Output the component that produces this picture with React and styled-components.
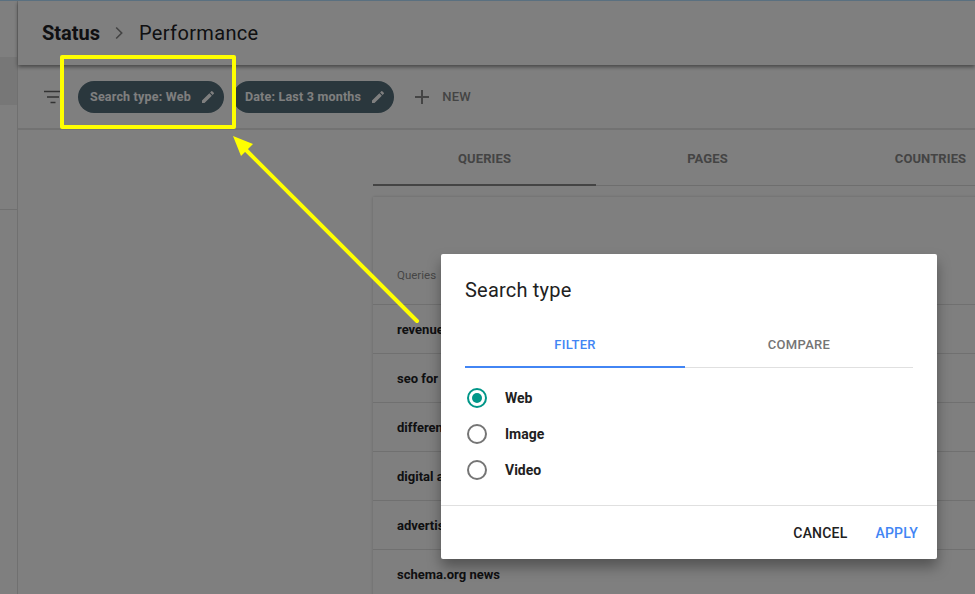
import React from 'react'
import styled, { createGlobalStyle } from 'styled-components'

const queries = [
  'revenue management',
  'seo for small business',
  'difference between seo',
  'digital advertising',
  'advertising agency',
  'schema.org news',
]

export default function App() {
  return (
    <Page>
      <GlobalStyle />
      <Sidebar>
        <SidebarItem />
        <SidebarLine />
      </Sidebar>
      <Main>
        <Header>
          <Crumb>Status</Crumb>
          <CrumbArrow viewBox="0 0 24 24">
            <path d="M8.6 5.4 15.2 12l-6.6 6.6" fill="none" stroke="#888" strokeWidth="2" />
          </CrumbArrow>
          <CrumbCurrent>Performance</CrumbCurrent>
        </Header>
        <FilterBar>
          <FilterIcon viewBox="0 0 18 14">
            <path d="M0 1.5h18M3 7h12M6.5 12.5h5" fill="none" stroke="#666" strokeWidth="1.6" />
          </FilterIcon>
          <Chip>
            Search type: Web
            <PencilIcon />
          </Chip>
          <Chip>
            Date: Last 3 months
            <PencilIcon />
          </Chip>
          <NewButton>
            <PlusIcon viewBox="0 0 14 14">
              <path d="M7 0v14M0 7h14" fill="none" stroke="#8a8a8a" strokeWidth="2" />
            </PlusIcon>
            NEW
          </NewButton>
        </FilterBar>
        <Content>
          <Tabs>
            <Tab $active>QUERIES</Tab>
            <Tab>PAGES</Tab>
            <Tab>COUNTRIES</Tab>
          </Tabs>
          <Card>
            <CardHead>Queries</CardHead>
            {queries.map((q) => (
              <Row key={q}>{q}</Row>
            ))}
          </Card>
        </Content>
      </Main>

      <Scrim />

      <Annotation viewBox="0 0 975 594">
        <rect x="62" y="57" width="172" height="70" fill="none" stroke="#ffff00" strokeWidth="4" strokeLinejoin="round" />
        <path d="M245 149 417 321" stroke="#ffff00" strokeWidth="4" strokeLinecap="round" />
        <path d="M233 136 253 144 241 156Z" fill="#ffff00" />
      </Annotation>

      <Dialog>
        <DialogTitle>Search type</DialogTitle>
        <DialogTabs>
          <DialogTab $active>FILTER</DialogTab>
          <DialogTab>COMPARE</DialogTab>
        </DialogTabs>
        <RadioList>
          <RadioRow>
            <Radio $checked />
            Web
          </RadioRow>
          <RadioRow>
            <Radio />
            Image
          </RadioRow>
          <RadioRow>
            <Radio />
            Video
          </RadioRow>
        </RadioList>
        <DialogFooter>
          <FooterButton>CANCEL</FooterButton>
          <FooterButton $primary>APPLY</FooterButton>
        </DialogFooter>
      </Dialog>
    </Page>
  )
}

function PencilIcon() {
  return (
    <Pencil viewBox="0 0 24 24">
      <path
        d="M3 17.25V21h3.75L17.81 9.94l-3.75-3.75L3 17.25zM20.71 7.04a1 1 0 0 0 0-1.41l-2.34-2.34a1 1 0 0 0-1.41 0l-1.83 1.83 3.75 3.75 1.83-1.83z"
        fill="#fff"
      />
    </Pencil>
  )
}

const GlobalStyle = createGlobalStyle`
  html, body {
    margin: 0;
    padding: 0;
    background: #fff;
  }
  body {
    font-family: Roboto, "Liberation Sans", sans-serif;
  }
`

const Page = styled.div`
  position: relative;
  display: flex;
  width: 975px;
  height: 594px;
  overflow: hidden;
  background: #fff;
  border-top: 1px solid #5a7080;
  box-sizing: border-box;
`

const Sidebar = styled.div`
  width: 18px;
  flex-shrink: 0;
  box-sizing: border-box;
  padding-top: 56px;
  border-right: 1px solid #e0e0e0;
`

const SidebarItem = styled.div`
  height: 48px;
  background: #eeeeee;
`

const SidebarLine = styled.div`
  margin-top: 104px;
  border-top: 1px solid #e0e0e0;
`

const Main = styled.div`
  flex: 1;
  min-width: 0;
  display: flex;
  flex-direction: column;
`

const Header = styled.div`
  height: 64px;
  flex-shrink: 0;
  display: flex;
  align-items: center;
  padding-left: 24px;
  box-shadow: 0 2px 4px rgba(0, 0, 0, 0.45);
  position: relative;
`

const Crumb = styled.span`
  font-size: 20px;
  font-weight: 700;
  color: #202124;
`

const CrumbArrow = styled.svg`
  width: 20px;
  height: 20px;
  margin: 0 10px 0 9px;
`

const CrumbCurrent = styled.span`
  font-size: 20px;
  font-weight: 400;
  letter-spacing: 0.35px;
  color: #202124;
`

const FilterBar = styled.div`
  height: 65px;
  flex-shrink: 0;
  box-sizing: border-box;
  display: flex;
  align-items: center;
  padding-left: 26px;
  border-bottom: 2px solid #e4e4e4;
`

const FilterIcon = styled.svg`
  width: 18px;
  height: 14px;
  margin-right: 16px;
`

const Chip = styled.div`
  height: 32px;
  box-sizing: border-box;
  display: flex;
  align-items: center;
  gap: 9px;
  padding: 0 8px 0 12px;
  margin-right: 9px;
  border-radius: 16px;
  background: #546e7a;
  color: #fff;
  font-size: 12.5px;
  font-weight: 700;
  letter-spacing: 0.2px;
  white-space: nowrap;
`

const Pencil = styled.svg`
  width: 16px;
  height: 16px;
`

const NewButton = styled.div`
  display: flex;
  align-items: center;
  gap: 13px;
  margin-left: 12px;
  font-size: 13px;
  font-weight: 500;
  letter-spacing: 0.3px;
  color: #888;
`

const PlusIcon = styled.svg`
  width: 14px;
  height: 14px;
`

const Content = styled.div`
  flex: 1;
  min-height: 0;
  padding-left: 355px;
`

const Tabs = styled.div`
  display: flex;
  height: 55px;
  border-bottom: 1px solid #dcdcdc;
  box-sizing: content-box;
`

const Tab = styled.div`
  flex: 0 0 223px;
  box-sizing: border-box;
  height: 56px;
  padding-top: 2px;
  display: flex;
  align-items: center;
  justify-content: center;
  font-size: 13px;
  font-weight: 700;
  letter-spacing: 0.1px;
  color: #888;
  border-bottom: 2px solid ${(p) => (p.$active ? '#888' : 'transparent')};
`

const Card = styled.div`
  margin-top: 11px;
  width: 700px;
  box-shadow: 0 0 3px rgba(0, 0, 0, 0.2);
`

const CardHead = styled.div`
  height: 108px;
  box-sizing: border-box;
  display: flex;
  align-items: flex-end;
  padding: 0 0 22px 24px;
  font-size: 11.5px;
  color: #8c8c8c;
  border-bottom: 1px solid #e0e0e0;
`

const Row = styled.div`
  height: 49px;
  box-sizing: border-box;
  display: flex;
  align-items: center;
  padding-left: 24px;
  font-size: 13px;
  font-weight: 700;
  color: #202124;
  border-bottom: 1px solid #e0e0e0;
`

const Scrim = styled.div`
  position: absolute;
  inset: 0;
  background: rgba(0, 0, 0, 0.5);
`

const Annotation = styled.svg`
  position: absolute;
  left: 0;
  top: -1px;
  width: 975px;
  height: 594px;
  pointer-events: none;
`

const Dialog = styled.div`
  position: absolute;
  left: 441px;
  top: 253px;
  width: 496px;
  height: 305px;
  display: flex;
  flex-direction: column;
  background: #fff;
  border-radius: 2px;
  box-shadow: 0 8px 14px rgba(0, 0, 0, 0.35);
`

const DialogTitle = styled.div`
  padding: 24px 24px 0;
  font-size: 20px;
  line-height: 24px;
  font-weight: 400;
  letter-spacing: 0.2px;
  color: #212121;
`

const DialogTabs = styled.div`
  display: flex;
  margin: 20px 24px 0;
  border-bottom: 1px solid #e0e0e0;
`

const DialogTab = styled.div`
  flex: 0 0 220px;
  height: 46px;
  margin-bottom: -1px;
  padding-left: ${(p) => (p.$active ? '0' : '8px')};
  box-sizing: border-box;
  display: flex;
  align-items: center;
  justify-content: center;
  font-size: 13px;
  font-weight: 500;
  letter-spacing: 0.3px;
  color: ${(p) => (p.$active ? '#4285f4' : '#757575')};
  border-bottom: 2px solid ${(p) => (p.$active ? '#4285f4' : 'transparent')};
`

const RadioList = styled.div`
  flex: 1;
  display: flex;
  flex-direction: column;
  gap: 16px;
  padding: 20px 26px 0;
`

const RadioRow = styled.div`
  height: 20px;
  display: flex;
  align-items: center;
  gap: 18px;
  font-size: 14px;
  font-weight: 700;
  color: #212121;
`

const Radio = styled.span`
  width: 20px;
  height: 20px;
  box-sizing: border-box;
  border-radius: 50%;
  border: 2px solid ${(p) => (p.$checked ? '#009688' : '#757575')};
  display: flex;
  align-items: center;
  justify-content: center;

  &::after {
    content: '';
    width: 10px;
    height: 10px;
    border-radius: 50%;
    background: ${(p) => (p.$checked ? '#009688' : 'transparent')};
  }
`

const DialogFooter = styled.div`
  height: 53px;
  flex-shrink: 0;
  display: flex;
  align-items: center;
  justify-content: flex-end;
  gap: 28px;
  padding: 0 19px 0 0;
  border-top: 1px solid #e0e0e0;
`

const FooterButton = styled.div`
  font-size: 14px;
  font-weight: 500;
  letter-spacing: 0.2px;
  color: ${(p) => (p.$primary ? '#4285f4' : '#212121')};
`
